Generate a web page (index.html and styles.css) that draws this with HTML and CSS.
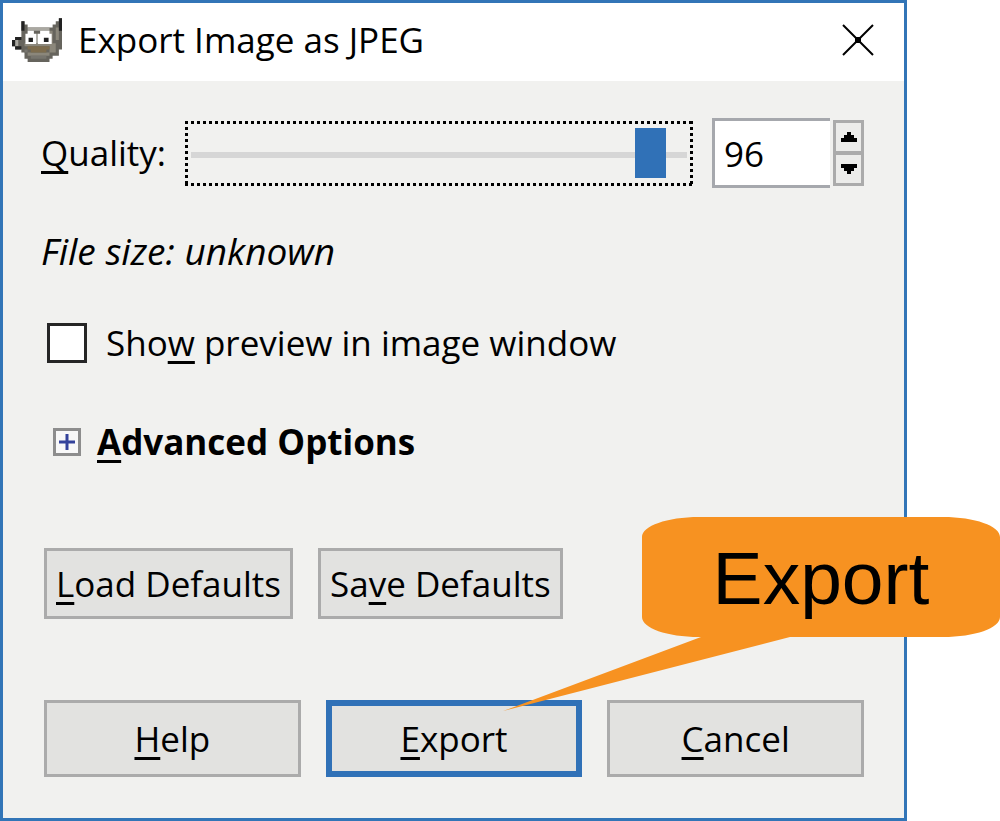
FILE: index.html
```
<!DOCTYPE html>
<html lang="en">
<head>
    <meta charset="UTF-8">
    <meta name="viewport" content="width=device-width, initial-scale=1.0">
    <title>Export Image as JPEG</title>
    <link rel="stylesheet" href="styles.css">
</head>
<body>
    <main class="window">
        <header class="titlebar">
            <svg class="wilber" viewBox="0 0 16 14" aria-hidden="true">
                <path fill="#66645d" d="M3 1 H4 V2 H5 V3 H13 V2 H14 V1 H15 V0 H16 V10 H15 V12 H13 V13 H12 V14 H5 V13 H4 V11 H3 V10 H1 V9 H0 V7 H1 V6 H3 Z"/>
                <path fill="#aaa8a1" d="M5 3 H12 V4 H5 Z M1 7 H2 V9 H1 Z"/>
                <path fill="#8b877b" d="M12 4 H13 V8 H14 V11 H12 Z M4 8 H12 V9 H4 Z M5 11 H12 V12 H5 Z M14 3 H15 V7 H14 Z"/>
                <path fill="#77756e" d="M6 12 H11 V13 H6 Z M4 10 H5 V11 H4 Z"/>
                <path fill="#fff" d="M4.3 5 H5 V4 H7 V5 H7.7 V8.3 H4.3 Z M8.3 5 H9 V4 H12 V5 H12.7 V8.3 H8.3 Z"/>
                <path fill="#b9b8b3" d="M7.7 5 H8.3 V8 H7.7 Z"/>
                <path fill="#222" d="M5.3 6.3 H6.7 V7.6 H5.3 Z M10.2 6.3 H11.7 V7.6 H10.2 Z M3 1 H4 V4 H3 Z M15 0 H16 V4 H15 Z M1 6 H3 V7 H1 Z M0 7 H1 V9 H0 Z M1 9 H3 V10 H1 Z"/>
                <path fill="#7d6c4d" d="M5 9 H12 V10 H11 V11 H6 V10 H5 Z"/>
            </svg>
            <h1>Export Image as JPEG</h1>
            <button class="close" type="button" aria-label="Close">
                <svg viewBox="0 0 32 32" aria-hidden="true">
                    <path d="M1 1 L31 31 M31 1 L1 31"/>
                    <rect x="14" y="14" width="4" height="4"/>
                </svg>
            </button>
        </header>

        <form class="content" id="export-form">
            <div class="quality">
                <label for="quality"><u>Q</u>uality:</label>
                <input class="scale" type="range" id="quality" min="0" max="100" value="96">
                <div class="spin">
                    <input type="number" id="quality-value" min="0" max="100" value="96" aria-label="Quality value">
                    <div class="steps">
                        <button type="button" id="up" aria-label="Increase quality">
                            <svg viewBox="0 0 16 10" aria-hidden="true"><path d="M6 0 H10 V3 H13 V6 H16 V10 H0 V6 H3 V3 H6 Z"/></svg>
                        </button>
                        <button type="button" id="down" aria-label="Decrease quality">
                            <svg viewBox="0 0 16 10" aria-hidden="true"><path d="M0 0 H16 V4 H13 V7 H10 V10 H6 V7 H3 V4 H0 Z"/></svg>
                        </button>
                    </div>
                </div>
            </div>

            <p class="filesize">File size: unknown</p>

            <div class="preview">
                <input type="checkbox" id="preview">
                <label for="preview">Sho<u>w</u> preview in image window</label>
            </div>

            <details class="advanced">
                <summary>
                    <svg viewBox="0 0 28 28" aria-hidden="true">
                        <rect x="1.5" y="1.5" width="25" height="25"/>
                        <path d="M6 14 H22 M14 6 V22"/>
                    </svg>
                    <span><u>A</u>dvanced Options</span>
                </summary>
            </details>

            <div class="defaults">
                <button class="btn" type="button"><u>L</u>oad Defaults</button>
                <button class="btn" type="button">Sa<u>v</u>e Defaults</button>
            </div>

            <div class="actions">
                <button class="btn" type="button"><u>H</u>elp</button>
                <button class="btn primary" type="submit"><u>E</u>xport</button>
                <button class="btn" type="button"><u>C</u>ancel</button>
            </div>
        </form>

        <div class="callout">
            <svg viewBox="0 0 497 194" aria-hidden="true">
                <path d="M139 20 C139 9 164 0 196 0 H440 C472 0 497 9 497 20 V100 C497 111 472 120 440 120 H287 L0 194 L198 120 H196 C164 120 139 111 139 100 Z"/>
            </svg>
            <span>Export</span>
        </div>
    </main>
    <script>
        const quality = document.getElementById("quality");
        const value = document.getElementById("quality-value");

        quality.addEventListener("input", () => {
            value.value = quality.value;
        });
        value.addEventListener("input", () => {
            quality.value = value.value;
        });
        document.getElementById("up").addEventListener("click", () => {
            value.stepUp();
            quality.value = value.value;
        });
        document.getElementById("down").addEventListener("click", () => {
            value.stepDown();
            quality.value = value.value;
        });
        document.getElementById("export-form").addEventListener("submit", (e) => {
            e.preventDefault();
        });
    </script>
</body>
</html>
```
FILE: styles.css
```
*{
    box-sizing: border-box;
}

body{
    margin: 0;
    padding-right: 93px;
    background-color: #fff;
    color: #000;
    font-family: "Open Sans", "Noto Sans", sans-serif;
    font-size: 35px;
    line-height: 48px;
}

button, input{
    font: inherit;
    color: inherit;
}

h1, p{
    margin: 0;
}

u{
    text-decoration-thickness: 3px;
    text-underline-offset: 5px;
    text-decoration-skip-ink: none;
}

.window{
    position: relative;
    border: 3px solid #3275b7;
    background-color: #f1f1ef;
}

.titlebar{
    display: flex;
    align-items: center;
    height: 78px;
    padding: 0 30px 4px 9px;
    gap: 16px;
    background-color: #fff;
}

.titlebar h1{
    flex: 1;
    font-size: 35px;
    font-weight: 400;
}

.wilber{
    width: 50px;
    height: 44px;
}

.close{
    display: flex;
    padding: 0;
    border: 0;
    background: none;
}

.close svg{
    width: 32px;
    height: 32px;
    stroke: #000;
    stroke-width: 2;
}

.content{
    display: flex;
    flex-direction: column;
    padding: 37px 40px 41px 38px;
}

.quality{
    display: flex;
    align-items: center;
    gap: 19px;
}

/* square dots on all four sides, trough in the middle */
.scale{
    flex: 1;
    min-width: 0;
    height: 65px;
    margin: 0;
    padding: 6px 9px 6px 6px;
    appearance: none;
    background:
        repeating-linear-gradient(90deg, #000 0 3px, transparent 3px 6px) top / 100% 3px no-repeat,
        repeating-linear-gradient(90deg, #000 0 3px, transparent 3px 6px) bottom / 100% 3px no-repeat,
        repeating-linear-gradient(#000 0 3px, transparent 3px 6px) left / 3px 100% no-repeat,
        repeating-linear-gradient(#000 0 3px, transparent 3px 6px) right / 3px 100% no-repeat,
        linear-gradient(#d6d6d6, #d6d6d6) 6px 31px / calc(100% - 12px) 6px no-repeat;
}

.scale::-webkit-slider-thumb{
    appearance: none;
    width: 31px;
    height: 50px;
    background-color: #3071b7;
}

.spin{
    display: flex;
    align-items: center;
    gap: 3px;
}

.spin input{
    width: 118px;
    height: 70px;
    padding: 0 9px;
    border: 3px solid #a6a8ad;
    border-right: 0;
    background-color: #fff;
    appearance: textfield;
}

.spin input::-webkit-inner-spin-button{
    appearance: none;
}

.steps{
    display: flex;
    flex-direction: column;
    width: 31px;
    border: 3px solid #ababab;
    background-color: #ababab;
    gap: 4px;
}

.steps button{
    display: flex;
    align-items: center;
    justify-content: center;
    height: 28px;
    padding: 0;
    border: 0;
    background-color: #ececea;
}

.steps svg{
    width: 16px;
    height: 10px;
}

.filesize{
    margin-top: 39px;
    font-size: 37px;
    font-style: italic;
}

.preview{
    display: flex;
    align-items: center;
    gap: 19px;
    margin-top: 44px;
    padding-left: 6px;
}

.preview input{
    width: 40px;
    height: 40px;
    margin: 0;
    appearance: none;
    border: 3px solid #262626;
    background-color: #fff;
}

.preview input:checked{
    background-color: #3071b7;
}

.advanced{
    margin-top: 51px;
    padding-left: 12px;
    font-weight: 700;
}

.advanced summary{
    display: flex;
    align-items: center;
    gap: 16px;
    list-style: none;
}

.advanced svg{
    width: 28px;
    height: 28px;
    fill: #f8f8f8;
    stroke: #8d8d8d;
    stroke-width: 3;
}

.advanced path{
    stroke: #34439b;
}

.btn{
    padding: 0;
    border: 3px solid #ababab;
    background-color: #e2e2e0;
}

.defaults{
    display: flex;
    gap: 25px;
    margin-top: 82px;
    padding-left: 3px;
}

.defaults .btn{
    height: 71px;
    padding: 0 9px;
}

.actions{
    display: grid;
    grid-template-columns: repeat(3, 1fr);
    gap: 25px;
    margin-top: 81px;
    padding-left: 3px;
}

.actions .btn{
    height: 77px;
}

.actions .primary{
    border: 6px solid #3071b7;
}

/* the bubble hangs over the right edge of the window */
.callout{
    position: absolute;
    right: -96px;
    bottom: 107px;
    width: 497px;
    height: 194px;
    pointer-events: none;
}

.callout svg{
    display: block;
    fill: #f79221;
}

.callout span{
    position: absolute;
    top: 0;
    right: 0;
    width: 358px;
    font-family: "Liberation Sans", Arial, sans-serif;
    font-size: 75px;
    line-height: 122px;
    text-align: center;
}
```
